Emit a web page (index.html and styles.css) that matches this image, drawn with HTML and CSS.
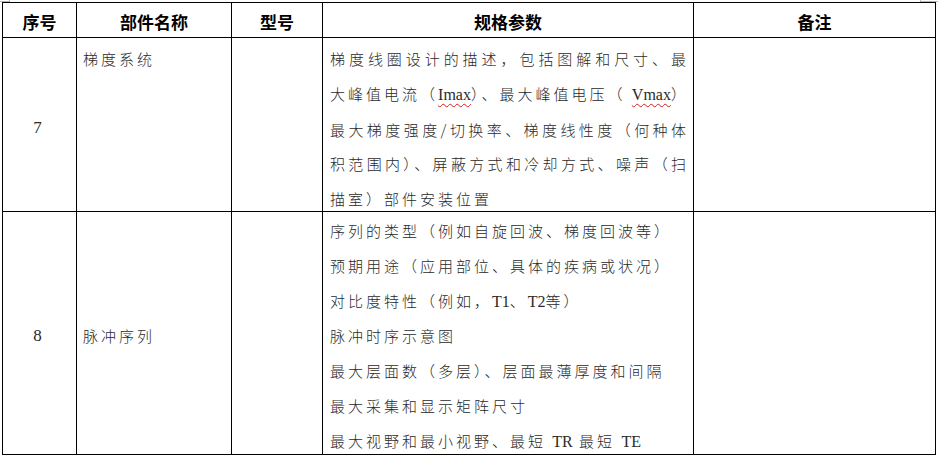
FILE: index.html
```html
<!DOCTYPE html>
<html lang="zh-CN">
<head>
<meta charset="utf-8">
<title>规格参数表</title>
<link rel="stylesheet" href="styles.css">
</head>
<body>
<div class="page">
  <span class="mark mark-tl"></span>
  <span class="mark mark-tr"></span>
  <div class="table">
    <div class="cell head">序号</div>
    <div class="cell head">部件名称</div>
    <div class="cell head">型号</div>
    <div class="cell head">规格参数</div>
    <div class="cell head">备注</div>

    <div class="cell num num7">7</div>
    <div class="cell name">梯度系统</div>
    <div class="cell"></div>
    <div class="cell spec spec7">
      <div class="j">梯度线圈设计的描述，包括图解和尺寸、最</div>
      <div class="j">大峰值电流（<span class="lat sq">Imax</span>）、最大峰值电压（ <span class="lat sq">Vmax</span>）</div>
      <div class="j">最大梯度强度/切换率、梯度线性度（何种体</div>
      <div class="j">积范围内）、屏蔽方式和冷却方式、噪声（扫</div>
      <div>描室）部件安装位置</div>
    </div>
    <div class="cell"></div>

    <div class="cell num num8">8</div>
    <div class="cell name name8">脉冲序列</div>
    <div class="cell"></div>
    <div class="cell spec spec8">
      <div>序列的类型（例如自旋回波、梯度回波等）</div>
      <div>预期用途（应用部位、具体的疾病或状况）</div>
      <div>对比度特性（例如，<span class="lat">T1</span>、<span class="lat">T2</span>等）</div>
      <div>脉冲时序示意图</div>
      <div>最大层面数（多层）、层面最薄厚度和间隔</div>
      <div>最大采集和显示矩阵尺寸</div>
      <div>最大视野和最小视野、最短 <span class="lat">TR</span> 最短 <span class="lat">TE</span></div>
    </div>
    <div class="cell"></div>
  </div>
</div>
</body>
</html>
```
FILE: styles.css
```css
html, body {
  margin: 0;
  background: #fff;
}

.page {
  position: relative;
  padding: 2px 0 0 2px;
}

.mark {
  position: absolute;
  top: 0;
  height: 1px;
  border-bottom: 1px solid #b4b4b4;
}

.mark-tl {
  left: 0;
  width: 9px;
  border-right: 1px solid #b4b4b4;
}

.mark-tr {
  left: 920px;
  width: 18px;
  border-left: 1px solid #b4b4b4;
}

.table {
  display: grid;
  grid-template-columns: 73px 154px 90px 370px 241px;
  grid-template-rows: 34px 173px 242px;
  gap: 1px;
  width: max-content;
  background: #000;
  border: 1px solid #000;
}

.cell {
  background: #fff;
  font-family: "Noto Sans CJK SC", sans-serif;
  font-size: 15px;
  letter-spacing: 3px;
  line-height: 34.8px;
  color: #2a2a2a;
  font-weight: 300;
}

.head {
  display: flex;
  align-items: center;
  justify-content: center;
  padding-top: 3px;
  box-sizing: border-box;
  font-size: 17px;
  letter-spacing: 0;
  font-weight: 700;
  color: #000;
  line-height: 1;
}

.num {
  display: flex;
  align-items: center;
  justify-content: center;
  font-family: "Liberation Serif", serif;
  font-size: 17px;
  letter-spacing: 0;
  font-weight: 400;
  padding-right: 4px;
}

.num7 {
  padding-top: 8px;
}

.num8 {
  padding-top: 7px;
}

.name {
  padding: 4px 0 0 6px;
}

.name8 {
  display: flex;
  align-items: center;
  padding-top: 7px;
}

.spec {
  padding: 0 4px 0 7px;
}

.spec7 {
  padding-top: 4px;
}

.spec8 {
  padding-top: 2px;
}

.j {
  text-align: justify;
  text-align-last: justify;
}

.lat {
  font-family: "Liberation Serif", serif;
  font-size: 16px;
  letter-spacing: 0;
  font-weight: 400;
}

.sq {
  text-decoration: underline wavy #d02020;
  text-decoration-thickness: 1px;
  text-underline-offset: 3px;
}
```
